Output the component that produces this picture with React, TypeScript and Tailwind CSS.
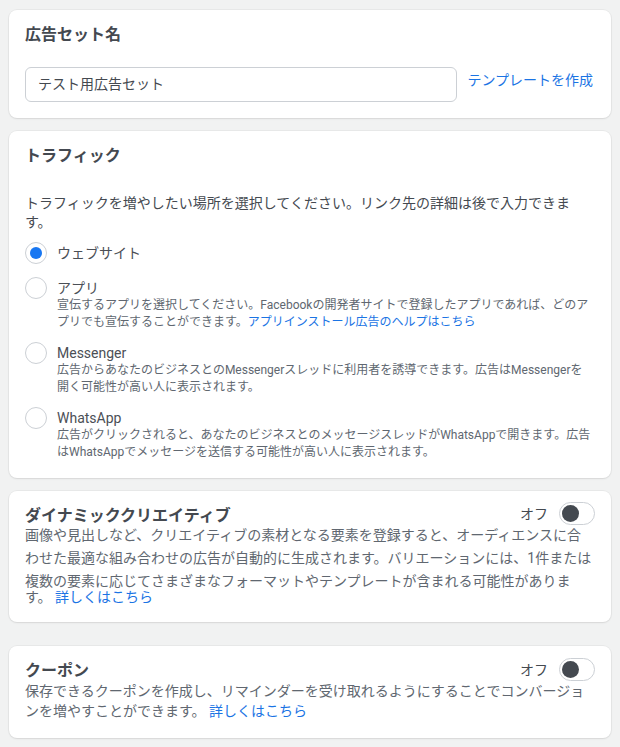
import React from "react";

const font = { fontFamily: 'Roboto, "Noto Sans CJK JP", sans-serif' };

function Radio({ checked }: { checked?: boolean }) {
  return (
    <div className="w-[22px] h-[22px] -mt-[2px] shrink-0 rounded-full border border-[#ccd0d5] bg-white flex items-center justify-center">
      {checked && <div className="w-[12px] h-[12px] rounded-full bg-[#1877f2]" />}
    </div>
  );
}

function Option({
  label,
  checked,
  children,
}: {
  label: string;
  checked?: boolean;
  children?: React.ReactNode;
}) {
  return (
    <div className="flex items-start gap-[10px]">
      <Radio checked={checked} />
      <div className="flex-1">
        <div className="text-[14px] leading-[18px] text-[#4b4f56]">{label}</div>
        {children && (
          <div className="text-[12px] leading-[17px] text-[#606770]">{children}</div>
        )}
      </div>
    </div>
  );
}

function Toggle() {
  return (
    <div className="flex items-center gap-[11px]">
      <span className="text-[14px] leading-[20px] text-[#444950]">オフ</span>
      <div className="w-[36px] h-[23px] rounded-full border border-[#ccd0d5] bg-white flex items-center px-[2px]">
        <div className="w-[17px] h-[17px] rounded-full bg-[#444950]" />
      </div>
    </div>
  );
}

const card =
  "bg-white rounded-[8px] shadow-[0_0_0_1px_rgba(0,0,0,0.035),0_1px_2px_rgba(0,0,0,0.08)] px-[16px]";

export default function App() {
  return (
    <div className="min-h-[747px] bg-[#f1f2f2] px-[9px] pt-[10px] pb-[10px]" style={font}>
      <div className={`${card} pt-[15px] pb-[16px]`}>
        <div className="text-[16px] leading-[20px] font-bold text-[#444950]">広告セット名</div>
        <div className="flex items-start gap-[10px] mt-[22px]">
          <div className="flex-1 h-[35px] rounded-[6px] border border-[#ccd0d5] bg-white flex items-center px-[12px] text-[14px] text-[#444950]">
            テスト用広告セット
          </div>
          <a className="text-[14px] leading-[20px] mt-[3px] mr-[2px] text-[#1b74e4]">テンプレートを作成</a>
        </div>
      </div>

      <div className={`${card} mt-[13px] pt-[15px] pb-[17px]`}>
        <div className="text-[16px] leading-[20px] font-bold text-[#444950]">トラフィック</div>
        <p className="mt-[28px] text-[14px] leading-[19px] text-[#444950]">
          トラフィックを増やしたい場所を選択してください。リンク先の詳細は後で入力できま
          <br />
          す。
        </p>
        <div className="mt-[12px] flex flex-col gap-[13px]">
          <div className="mb-[2px]">
            <Option label="ウェブサイト" checked />
          </div>
          <Option label="アプリ">
            宣伝するアプリを選択してください。Facebookの開発者サイトで登録したアプリであれば、どのア
            <br />
            プリでも宣伝することができます。
            <a className="text-[#1b74e4]">アプリインストール広告のヘルプはこちら</a>
          </Option>
          <Option label="Messenger">
            広告からあなたのビジネスとのMessengerスレッドに利用者を誘導できます。広告はMessengerを
            <br />
            開く可能性が高い人に表示されます。
          </Option>
          <Option label="WhatsApp">
            広告がクリックされると、あなたのビジネスとのメッセージスレッドがWhatsAppで開きます。広告
            <br />
            はWhatsAppでメッセージを送信する可能性が高い人に表示されます。
          </Option>
        </div>
      </div>

      <div className={`${card} mt-[13px] pt-[11px] pb-[16px]`}>
        <div className="flex items-start justify-between">
          <div className="text-[16px] leading-[20px] font-bold text-[#444950] mt-[4px]">
            ダイナミッククリエイティブ
          </div>
          <Toggle />
        </div>
        <div className="-mt-[2px] text-[14px] text-[#606770] whitespace-nowrap">
          <p className="leading-[23px]">
            画像や見出しなど、クリエイティブの素材となる要素を登録すると、オーディエンスに合
            <br />
            わせた最適な組み合わせの広告が自動的に生成されます。バリエーションには、1件または
            <br />
            複数の要素に応じてさまざまなフォーマットやテンプレートが含まれる可能性がありま
          </p>
          <p className="leading-[17px] -mt-[4px]">
            す。 <a className="text-[#1b74e4]">詳しくはこちら</a>
          </p>
        </div>
      </div>

      <div className={`${card} mt-[24px] pt-[12px] pb-[17px]`}>
        <div className="flex items-start justify-between">
          <div className="text-[16px] leading-[20px] font-bold text-[#444950] mt-[3px]">クーポン</div>
          <Toggle />
        </div>
        <p className="text-[14px] leading-[20px] text-[#606770] whitespace-nowrap">
          保存できるクーポンを作成し、リマインダーを受け取れるようにすることでコンバージョ
          <br />
          ンを増やすことができます。 <a className="text-[#1b74e4]">詳しくはこちら</a>
        </p>
      </div>
    </div>
  );
}
